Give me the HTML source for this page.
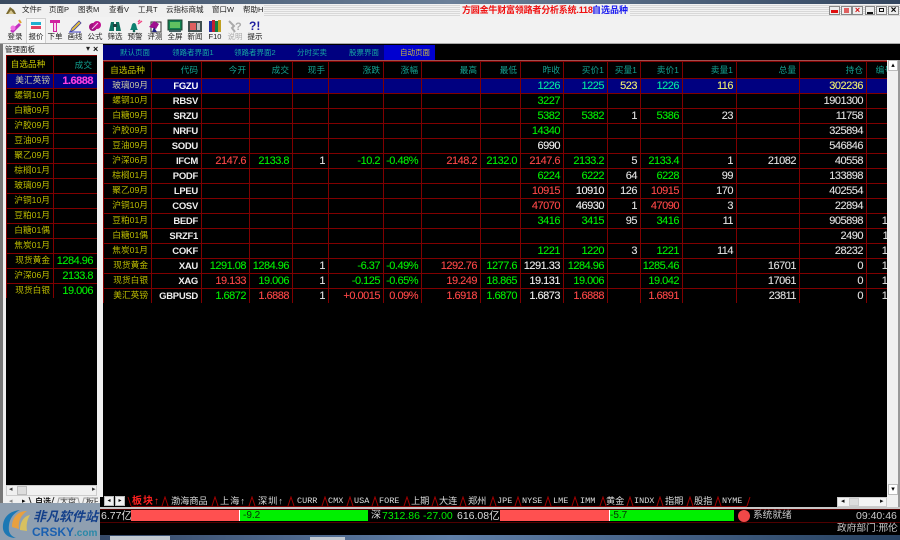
<!DOCTYPE html>
<html><head><meta charset="utf-8">
<style>
html,body{margin:0;padding:0;background:#000}
#r{position:relative;width:900px;height:540px;overflow:hidden;background:#000;font-family:"Liberation Sans","Noto Sans CJK SC",sans-serif;font-size:10px}
.a{position:absolute;white-space:nowrap}
.m{top:4px;font-size:7.5px;color:#222;line-height:12px}
.tl{top:31px;width:30px;text-align:center;font-size:7.5px;color:#222;line-height:12px}
.ic{position:absolute;top:19px;width:16px;height:14px}
.t{top:46px;font-size:7.5px;color:#16a8a0;line-height:14px}
#g{position:absolute;left:103px;top:60px;width:784px;height:243px;overflow:hidden;border-top:1px solid #a05050;box-sizing:border-box}
table{border-collapse:collapse;table-layout:fixed}
#g table{position:absolute;left:0;top:0;width:793px}
td{border:1px solid #800000;padding:0 3px 0 0;height:14px;line-height:14px;text-align:right;color:#e0e0e0;overflow:hidden;white-space:nowrap;box-sizing:border-box;font-size:11px;letter-spacing:-.5px;-webkit-text-stroke:.1px}
tr.h td{height:16px;color:#12a090;font-size:8.7px;line-height:16px;letter-spacing:0;-webkit-text-stroke:0}
td.n{color:#bcbc00;font-size:8.7px;padding-right:3px;letter-spacing:0;-webkit-text-stroke:0;vertical-align:top;line-height:13px}
td.c{color:#eee;font-weight:bold;font-size:9.5px;letter-spacing:-.3px;-webkit-text-stroke:0;vertical-align:bottom;line-height:13px;padding-top:1px}
.g,td.g{color:#00f000}.x,td.x{color:#ff4848}td.w{color:#f0f0f0}
tr.s td{background:#000080;color:#f0f070}
tr.s td.n{color:#c8c8a0}
tr.s td.tg{color:#00e8a0}
tr.s td.c{color:#fff}
#l{position:absolute;left:6px;top:55px;width:91px;height:243px;overflow:hidden}
#l td{padding-right:4px;height:15px}
#l td.n{padding-right:3px}
.bt{top:496px;font-size:9.2px;color:#ddd;line-height:11px}
.bl{font-family:"Liberation Mono","Noto Sans CJK SC",monospace;font-size:8.5px}
.sb{position:absolute;background:#f0f0f0;border:1px solid #bbb;box-sizing:border-box;color:#000;text-align:center}
</style></head><body><div id="r">

<!-- window chrome -->
<div class="a" style="left:0;top:0;width:900px;height:4px;background:linear-gradient(90deg,#3a4a60,#6a7f98 50%,#33465f)"></div>
<div class="a" style="left:0;top:4px;width:900px;height:13px;background:repeating-linear-gradient(0deg,#f2f2f2 0,#f2f2f2 1px,#d8d8d8 1px,#d8d8d8 2px)"></div>
<div class="a" style="left:0;top:4px;width:264px;height:13px;background:#f0f0f0"></div>
<div class="a" style="left:460px;top:4px;width:170px;height:13px;background:#f0f0f0"></div>
<div class="a" style="left:0;top:17px;width:900px;height:27px;background:#f2f2f2;border-bottom:1px solid #aaa;box-sizing:border-box"></div>
<div class="a" style="left:0;top:44px;width:103px;height:453px;background:#f0f0f0"></div>
<div class="a" style="left:0;top:497px;width:900px;height:12px;background:#000"></div>
<div class="a" style="left:0;top:497px;width:100px;height:10px;background:#f0f0f0"></div>
<div class="a" style="left:0;top:44px;width:3px;height:460px;background:#777"></div>

<!-- menu -->
<svg class="a" style="left:5px;top:5px" width="12" height="11"><path d="M1 9L5 2l4 3 2 4z" fill="#7a6a30"/><path d="M3 9l3-4 3 4z" fill="#d8c890"/></svg>
<span class="a m" style="left:22px">文件F</span><span class="a m" style="left:49px">页面P</span><span class="a m" style="left:78px">图表M</span><span class="a m" style="left:109px">查看V</span><span class="a m" style="left:138px">工具T</span><span class="a m" style="left:166px">云指标商城</span><span class="a m" style="left:212px">窗口W</span><span class="a m" style="left:243px">帮助H</span>

<span class="a" style="left:462px;top:3px;font-size:9px;letter-spacing:-.2px;font-weight:bold;color:#f01010;line-height:14px">方圆金牛财富领路者分析系统.118</span>
<span class="a" style="left:592px;top:3px;font-size:9px;font-weight:bold;color:#1818f0;line-height:14px">自选品种</span>

<!-- mdi buttons -->
<div class="a" style="left:829px;top:6px;width:11px;height:9px;background:#eee;border:1px solid #888;box-sizing:border-box"><div style="margin:3px 1px;height:3px;background:#e01010"></div></div>
<div class="a" style="left:841px;top:6px;width:11px;height:9px;background:#eee;border:1px solid #888;box-sizing:border-box"><div style="margin:1px 2px;height:5px;background:#e06060"></div></div>
<div class="a" style="left:852px;top:6px;width:11px;height:9px;background:#eee;border:1px solid #888;box-sizing:border-box;color:#d01010;font-size:9px;line-height:7px;text-align:center;font-weight:bold">×</div>
<div class="a" style="left:865px;top:6px;width:10px;height:9px;background:#eee;border:1px solid #888;box-sizing:border-box"><div style="margin:5px 1px 0;height:2px;background:#111"></div></div>
<div class="a" style="left:876px;top:6px;width:11px;height:9px;background:#eee;border:1px solid #888;box-sizing:border-box"><div style="margin:1px 2px;height:4px;border:1px solid #111;box-sizing:border-box"></div></div>
<div class="a" style="left:888px;top:6px;width:11px;height:9px;background:#eee;border:1px solid #888;box-sizing:border-box;color:#000;font-size:10px;line-height:7px;text-align:center;font-weight:bold">×</div>

<!-- toolbar -->
<div class="a" style="left:26px;top:18px;width:20px;height:25px;background:#f8f8f8;border:1px solid #d0d0d0;border-bottom:0;box-sizing:border-box"></div>
<svg class="ic" style="left:7px" viewBox="0 0 16 14"><path d="M3 12L12 4l2 2-8 8z" fill="#c030c0"/><circle cx="6" cy="9" r="2.5" fill="#f070e0"/><path d="M12 1l2 3" stroke="#e0a030" stroke-width="2"/></svg>
<svg class="ic" style="left:28px" viewBox="0 0 16 14"><rect x="3" y="3" width="10" height="3" fill="#20b0d0"/><rect x="3" y="7" width="10" height="3" fill="#e04060"/></svg>
<svg class="ic" style="left:47px" viewBox="0 0 16 14"><path d="M3 1h10v3h-3v9H6V4H3z" fill="#d020a0"/><path d="M7 4v8h2V4z" fill="#f8d0f0"/></svg>
<svg class="ic" style="left:67px" viewBox="0 0 16 14"><path d="M3 13l2-4 7-7 2 2-7 7z" fill="#e0c040" stroke="#4040a0" stroke-width=".8"/><path d="M2 13h12" stroke="#4040c0"/></svg>
<svg class="ic" style="left:87px" viewBox="0 0 16 14"><ellipse cx="6" cy="8" rx="4" ry="4" fill="#a01080"/><ellipse cx="10" cy="6" rx="4" ry="4" fill="#c01090"/><path d="M5 10l6-6" stroke="#f0d0f0"/></svg>
<svg class="ic" style="left:107px" viewBox="0 0 16 14"><path d="M2 12l2-9h3v9zM9 12V3h3l2 9z" fill="#107060"/><rect x="6" y="5" width="4" height="3" fill="#204040"/></svg>
<svg class="ic" style="left:127px" viewBox="0 0 16 14"><path d="M3 11c2-2 1-7 4-7s2 5 4 7z" fill="#108070"/><circle cx="7" cy="12" r="1.3" fill="#106050"/><path d="M11 5l4-3M11 3l2-2" stroke="#f04080" stroke-width="1.4"/></svg>
<svg class="ic" style="left:147px" viewBox="0 0 16 14"><rect x="4" y="3" width="10" height="10" fill="#fff" stroke="#333"/><path d="M2 8l5-6 5 3-3 5z" fill="#a01090"/><path d="M5 13l2-5 3 5z" fill="#202080"/></svg>
<svg class="ic" style="left:167px" viewBox="0 0 16 14"><rect x="1" y="1" width="14" height="10" fill="#108050" stroke="#204030"/><rect x="3" y="3" width="10" height="6" fill="#60c060"/><rect x="2" y="11" width="12" height="2" fill="#406060"/></svg>
<svg class="ic" style="left:187px" viewBox="0 0 16 14"><rect x="1" y="2" width="14" height="11" fill="#405050"/><rect x="3" y="4" width="6" height="7" fill="#e06060"/><rect x="10" y="4" width="3" height="7" fill="#c0c0c0"/></svg>
<svg class="ic" style="left:207px" viewBox="0 0 16 14"><rect x="2" y="2" width="3" height="11" fill="#2030a0"/><rect x="5" y="1" width="3" height="12" fill="#c02030"/><rect x="8" y="2" width="3" height="11" fill="#108040"/><rect x="11" y="1" width="3" height="12" fill="#c0a020"/></svg>
<svg class="ic" style="left:227px" viewBox="0 0 16 14"><path d="M2 2l5 5-2 2 3 4" fill="none" stroke="#aaa" stroke-width="2"/><text x="8" y="11" font-size="11" font-weight="bold" fill="#aaa" font-family="Liberation Sans">?</text></svg>
<span class="a" style="left:249px;top:19px;font-size:12px;font-weight:bold;color:#2020a0;line-height:14px">?!</span>
<span class="a tl" style="left:0">登录</span><span class="a tl" style="left:21px">报价</span><span class="a tl" style="left:40px">下单</span><span class="a tl" style="left:60px">画线</span><span class="a tl" style="left:80px">公式</span><span class="a tl" style="left:100px">筛选</span><span class="a tl" style="left:120px">预警</span><span class="a tl" style="left:140px">评测</span><span class="a tl" style="left:160px">全屏</span><span class="a tl" style="left:180px">新闻</span><span class="a tl" style="left:200px">F10</span><span class="a tl" style="left:220px;color:#aaa">说明</span><span class="a tl" style="left:240px">提示</span>

<!-- left panel -->
<span class="a" style="left:5px;top:44px;font-size:7.5px;color:#222;line-height:11px">管理面板</span>
<span class="a" style="left:86px;top:44px;font-size:8px;color:#222;line-height:10px">▾</span><span class="a" style="left:93px;top:44px;font-size:9px;font-weight:bold;color:#111;line-height:10px">×</span>
<div class="a" style="left:6px;top:55px;width:91px;height:430px;background:#000"></div>
<div id="l"><table style="width:91px"><colgroup><col style="width:47px"><col style="width:44px"></colgroup>
<tr class="h"><td class="n" style="height:18px;padding-right:4px;text-align:center;color:#c4c400;font-size:8.7px;letter-spacing:0">自选品种</td><td style="height:18px;color:#12a090;font-size:8.7px;padding-right:5px;letter-spacing:0;-webkit-text-stroke:0">成交</td></tr>
<tr class="s"><td class="n">美汇英镑</td><td style="color:#ff40e0;font-weight:bold;padding-right:4px">1.6888</td></tr>
<tr><td class="n">螺钢10月</td><td></td></tr><tr><td class="n">白糖09月</td><td></td></tr><tr><td class="n">沪胶09月</td><td></td></tr><tr><td class="n">豆油09月</td><td></td></tr><tr><td class="n">聚乙09月</td><td></td></tr><tr><td class="n">棕榈01月</td><td></td></tr><tr><td class="n">玻璃09月</td><td></td></tr><tr><td class="n">沪铜10月</td><td></td></tr><tr><td class="n">豆粕01月</td><td></td></tr><tr><td class="n">白糖01偶</td><td></td></tr><tr><td class="n">焦炭01月</td><td></td></tr>
<tr><td class="n">现货黄金</td><td class="g">1284.96</td></tr><tr><td class="n">沪深06月</td><td class="g">2133.8</td></tr><tr><td class="n">现货白银</td><td class="g">19.006</td></tr>
</table></div>
<div class="a" style="left:6px;top:485px;width:91px;height:11px;background:#f0f0f0;border:1px solid #ccc;box-sizing:border-box"></div>
<span class="a" style="left:9px;top:485px;font-size:7px;color:#333">◂</span><span class="a" style="left:92px;top:485px;font-size:7px;color:#333">▸</span>
<div class="a" style="left:17px;top:486px;width:10px;height:9px;background:#ddd;border:1px solid #bbb;box-sizing:border-box"></div>
<span class="a" style="left:9px;top:497px;font-size:7px;color:#888;line-height:9px">◂</span><span class="a" style="left:22px;top:497px;font-size:7px;color:#000;line-height:9px">▸</span>
<span class="a" style="left:35px;top:496px;font-size:8px;font-weight:bold;color:#111;line-height:11px">自选</span><span class="a" style="left:60px;top:496px;font-size:8px;color:#333;line-height:11px">大盘</span><span class="a" style="left:86px;top:496px;width:12px;overflow:hidden;font-size:8px;color:#333;line-height:11px">板F</span>
<svg class="a" style="left:28px;top:496px" width="72" height="11"><path d="M1 1l3 9M26 1l-3 9" stroke="#333" fill="none"/><path d="M29 10l2-8h19l2 8M54 10l2-8h14" stroke="#999" fill="none"/></svg>

<!-- page tabs -->
<div class="a" style="left:103px;top:45px;width:281px;height:15px;background:#000080"></div>
<div class="a" style="left:384px;top:45px;width:51px;height:15px;background:#0000d0"></div>
<span class="a t" style="left:120px">默认页面</span><span class="a t" style="left:172px">领路者界面1</span><span class="a t" style="left:234px">领路者界面2</span><span class="a t" style="left:297px">分时买卖</span><span class="a t" style="left:349px">股票界面</span><span class="a t" style="left:400px;color:#d0c040">自动页面</span>

<!-- main grid -->
<div id="g"><table><colgroup><col style="width:48px"><col style="width:50px"><col style="width:48px"><col style="width:43px"><col style="width:36px"><col style="width:55px"><col style="width:38px"><col style="width:59px"><col style="width:40px"><col style="width:43px"><col style="width:44px"><col style="width:33px"><col style="width:42px"><col style="width:54px"><col style="width:63px"><col style="width:67px"><col style="width:30px"></colgroup>
<tr class="h"><td style="color:#c4c400;text-align:center;padding:0">自选品种</td><td>代码</td><td>今开</td><td>成交</td><td>现手</td><td>涨跌</td><td>涨幅</td><td>最高</td><td>最低</td><td>昨收</td><td>买价1</td><td>买量1</td><td>卖价1</td><td>卖量1</td><td>总量</td><td>持仓</td><td>编号</td></tr>
<tr class="s"><td class="n">玻璃09月</td><td class="c">FGZU</td><td></td><td></td><td></td><td></td><td></td><td></td><td></td><td class="tg">1226</td><td class="tg">1225</td><td>523</td><td class="tg">1226</td><td>116</td><td></td><td>302236</td><td>1</td></tr>
<tr><td class="n">螺钢10月</td><td class="c">RBSV</td><td></td><td></td><td></td><td></td><td></td><td></td><td></td><td class="g">3227</td><td></td><td></td><td></td><td></td><td></td><td>1901300</td><td>2</td></tr>
<tr><td class="n">白糖09月</td><td class="c">SRZU</td><td></td><td></td><td></td><td></td><td></td><td></td><td></td><td class="g">5382</td><td class="g">5382</td><td>1</td><td class="g">5386</td><td>23</td><td></td><td>11758</td><td>3</td></tr>
<tr><td class="n">沪胶09月</td><td class="c">NRFU</td><td></td><td></td><td></td><td></td><td></td><td></td><td></td><td class="g">14340</td><td></td><td></td><td></td><td></td><td></td><td>325894</td><td>4</td></tr>
<tr><td class="n">豆油09月</td><td class="c">SODU</td><td></td><td></td><td></td><td></td><td></td><td></td><td></td><td class="w">6990</td><td></td><td></td><td></td><td></td><td></td><td>546846</td><td>5</td></tr>
<tr><td class="n">沪深06月</td><td class="c">IFCM</td><td class="x">2147.6</td><td class="g">2133.8</td><td>1</td><td class="g">-10.2</td><td class="g">-0.48%</td><td class="x">2148.2</td><td class="g">2132.0</td><td class="x">2147.6</td><td class="g">2133.2</td><td>5</td><td class="g">2133.4</td><td>1</td><td>21082</td><td>40558</td><td>6</td></tr>
<tr><td class="n">棕榈01月</td><td class="c">PODF</td><td></td><td></td><td></td><td></td><td></td><td></td><td></td><td class="g">6224</td><td class="g">6222</td><td>64</td><td class="g">6228</td><td>99</td><td></td><td>133898</td><td>7</td></tr>
<tr><td class="n">聚乙09月</td><td class="c">LPEU</td><td></td><td></td><td></td><td></td><td></td><td></td><td></td><td class="x">10915</td><td class="w">10910</td><td>126</td><td class="x">10915</td><td>170</td><td></td><td>402554</td><td>8</td></tr>
<tr><td class="n">沪铜10月</td><td class="c">COSV</td><td></td><td></td><td></td><td></td><td></td><td></td><td></td><td class="x">47070</td><td class="w">46930</td><td>1</td><td class="x">47090</td><td>3</td><td></td><td>22894</td><td>9</td></tr>
<tr><td class="n">豆粕01月</td><td class="c">BEDF</td><td></td><td></td><td></td><td></td><td></td><td></td><td></td><td class="g">3416</td><td class="g">3415</td><td>95</td><td class="g">3416</td><td>11</td><td></td><td>905898</td><td>10</td></tr>
<tr><td class="n">白糖01偶</td><td class="c">SRZF1</td><td></td><td></td><td></td><td></td><td></td><td></td><td></td><td></td><td></td><td></td><td></td><td></td><td></td><td>2490</td><td>11</td></tr>
<tr><td class="n">焦炭01月</td><td class="c">COKF</td><td></td><td></td><td></td><td></td><td></td><td></td><td></td><td class="g">1221</td><td class="g">1220</td><td>3</td><td class="g">1221</td><td>114</td><td></td><td>28232</td><td>12</td></tr>
<tr><td class="n">现货黄金</td><td class="c">XAU</td><td class="g">1291.08</td><td class="g">1284.96</td><td>1</td><td class="g">-6.37</td><td class="g">-0.49%</td><td class="x">1292.76</td><td class="g">1277.6</td><td class="w">1291.33</td><td class="g">1284.96</td><td></td><td class="g">1285.46</td><td></td><td>16701</td><td>0</td><td>13</td></tr>
<tr><td class="n">现货白银</td><td class="c">XAG</td><td class="x">19.133</td><td class="g">19.006</td><td>1</td><td class="g">-0.125</td><td class="g">-0.65%</td><td class="x">19.249</td><td class="g">18.865</td><td class="w">19.131</td><td class="g">19.006</td><td></td><td class="g">19.042</td><td></td><td>17061</td><td>0</td><td>14</td></tr>
<tr><td class="n">美汇英镑</td><td class="c">GBPUSD</td><td class="g">1.6872</td><td class="x">1.6888</td><td>1</td><td class="x">+0.0015</td><td class="x">0.09%</td><td class="x">1.6918</td><td class="g">1.6870</td><td class="w">1.6873</td><td class="x">1.6888</td><td></td><td class="x">1.6891</td><td></td><td>23811</td><td>0</td><td>15</td></tr>
</table></div>

<!-- right scrollbar -->
<div class="a" style="left:887px;top:60px;width:13px;height:449px;background:#f0f0f0"></div>
<div class="sb" style="left:888px;top:60px;width:10px;height:11px;font-size:7px;line-height:9px;background:#fff">▴</div>
<div class="sb" style="left:888px;top:484px;width:10px;height:11px;font-size:7px;line-height:9px;background:#fff">▾</div>
<div class="a" style="left:898px;top:60px;width:2px;height:449px;background:#999"></div>

<!-- bottom tabs -->
<div class="sb" style="left:104px;top:496px;width:10px;height:10px;font-size:6px;line-height:8px">◂</div>
<div class="sb" style="left:115px;top:496px;width:10px;height:10px;font-size:6px;line-height:8px">▸</div>
<svg class="a" style="left:125px;top:496px" width="630" height="11"><path d="M3 1l3 9M37 10l3-9 3 9M87 10l3-9 3 9M124 10l3-9 3 9M163 10l3-9 3 9M197 10l3-9 3 9M222 10l3-9 3 9M247 10l3-9 3 9M279 10l3-9 3 9M307 10l3-9 3 9M335 10l3-9 3 9M365 10l3-9 3 9M390 10l3-9 3 9M420 10l3-9 3 9M447 10l3-9 3 9M475 10l3-9 3 9M502 10l3-9 3 9M532 10l3-9 3 9M562 10l3-9 3 9M590 10l3-9 3 9M622 10l3-9" stroke="#a00000" fill="none"/><path d="M6 10.500H622" stroke="#800000"/></svg>
<span class="a bt" style="left:132px;color:#ff2020;font-weight:bold;font-size:10px;letter-spacing:1px">板块↑</span>
<span class="a bt" style="left:171px">渤海商品</span><span class="a bt" style="left:220px;letter-spacing:1px">上海↑</span><span class="a bt" style="left:258px;letter-spacing:1px">深圳↑</span>
<span class="a bt bl" style="left:297px">CURR</span><span class="a bt bl" style="left:328px">CMX</span><span class="a bt bl" style="left:354px">USA</span><span class="a bt bl" style="left:379px">FORE</span>
<span class="a bt" style="left:411px">上期</span><span class="a bt" style="left:439px">大连</span><span class="a bt" style="left:468px">郑州</span>
<span class="a bt bl" style="left:497px">JPE</span><span class="a bt bl" style="left:522px">NYSE</span><span class="a bt bl" style="left:553px">LME</span><span class="a bt bl" style="left:580px">IMM</span>
<span class="a bt" style="left:606px">黄金</span><span class="a bt bl" style="left:634px">INDX</span><span class="a bt" style="left:665px">指期</span><span class="a bt" style="left:694px">股指</span><span class="a bt bl" style="left:722px">NYME</span>
<div class="a" style="left:837px;top:497px;width:50px;height:10px;background:#f4f4f4;border:1px solid #ccc;box-sizing:border-box"></div>
<span class="a" style="left:841px;top:497px;font-size:7px;color:#111;line-height:9px">◂</span><span class="a" style="left:880px;top:497px;font-size:7px;color:#111;line-height:9px">▸</span>
<div class="a" style="left:849px;top:498px;width:10px;height:8px;background:#ddd;border:1px solid #ccc;box-sizing:border-box"></div>
<div class="a" style="left:0;top:507px;width:900px;height:2px;background:#c8c8c8"></div>

<!-- status bar -->
<div class="a" style="left:0;top:509px;width:900px;height:14px;background:#000;border-top:1px solid #500000;border-bottom:1px solid #500000;box-sizing:border-box"></div>
<span class="a" style="left:101px;top:509px;font-size:10.500px;color:#ddd;line-height:14px">6.77亿</span>
<div class="a" style="left:131px;top:510px;width:108px;height:11px;background:#ff5050"></div>
<div class="a" style="left:239px;top:510px;width:129px;height:11px;background:#00f000;border-left:1px solid #fff;box-sizing:border-box"></div>
<span class="a" style="left:243px;top:510px;font-size:10px;color:#083008;line-height:12px">-9.2</span>
<span class="a" style="left:371px;top:509px;font-size:10px;color:#ddd;line-height:14px">深</span>
<span class="a g" style="left:382px;top:509px;font-size:10.500px;line-height:14px">7312.86</span>
<span class="a g" style="left:423px;top:509px;font-size:10.500px;line-height:14px">-27.00</span>
<span class="a" style="left:457px;top:509px;font-size:10.500px;color:#ddd;line-height:14px">616.08亿</span>
<div class="a" style="left:500px;top:510px;width:109px;height:11px;background:#ff5050"></div>
<div class="a" style="left:609px;top:510px;width:125px;height:11px;background:#00f000;border-left:1px solid #fff;box-sizing:border-box"></div>
<span class="a" style="left:610px;top:510px;font-size:10px;color:#083008;line-height:12px">-5.7</span>
<div class="a" style="left:738px;top:510px;width:12px;height:12px;border-radius:50%;background:#f04848"></div>
<span class="a" style="left:753px;top:509px;font-size:9.7px;color:#ccc;line-height:14px">系统就绪</span>
<span class="a" style="left:856px;top:509px;font-size:10.500px;color:#ccc;line-height:14px">09:40:46</span>
<span class="a" style="left:837px;top:523px;font-size:9.7px;color:#ccc;line-height:12px">政府部门:邢伦</span>

<!-- taskbar -->
<div class="a" style="left:0;top:535px;width:900px;height:5px;background:linear-gradient(90deg,#2a3a55,#5f7fa8 50%,#26405f)"></div>
<div class="a" style="left:110px;top:536px;width:60px;height:4px;background:#c0c8d0"></div>
<div class="a" style="left:310px;top:537px;width:35px;height:3px;background:#c0c8d0"></div>

<!-- watermark -->
<div class="a" style="left:0;top:503px;width:100px;height:37px;background:#8f9fb0"></div>
<svg class="a" style="left:0;top:505px" width="36" height="35"><path d="M3 24C2 12 10 6 20 5 12 9 8 16 9 26 10 30 13 32 16 33 8 33 4 29 3 24z" fill="#1c78b4"/><path d="M12 22C12 12 18 6 27 6 20 11 18 17 19 24z" fill="#e8a040"/><path d="M20 25C20 17 24 11 30 10 27 15 26 20 27 26z" fill="#d8c060"/></svg>
<span class="a" style="left:33px;top:509px;font-size:13px;font-weight:bold;font-style:italic;color:#14408a;line-height:16px">非凡软件站</span>
<span class="a" style="left:32px;top:526px;font-size:12px;font-weight:bold;color:#1a60b0;line-height:13px">CRSKY<span style="color:#2a88a8;font-size:10px">.com</span></span>

</div></body></html>
